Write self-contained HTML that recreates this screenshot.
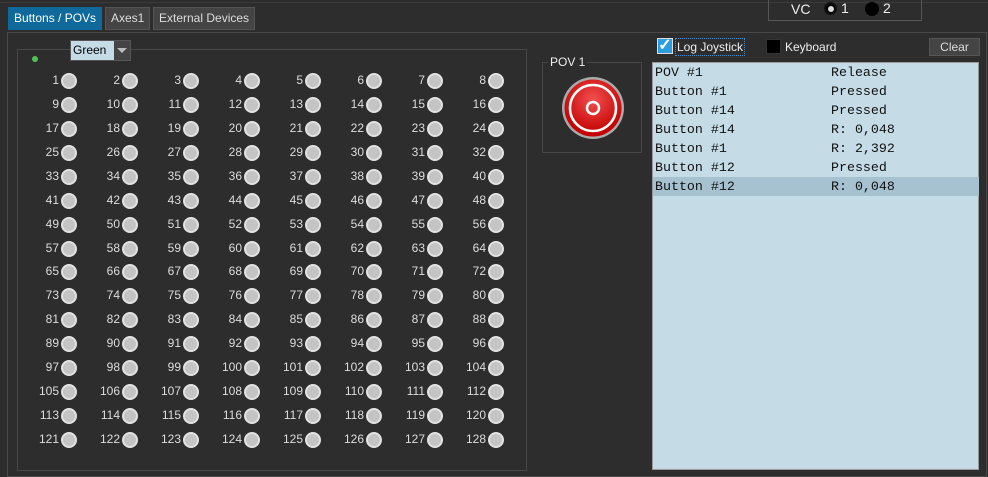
<!DOCTYPE html>
<html><head><style>
*{margin:0;padding:0;box-sizing:border-box}
body{width:988px;height:477px;background:#2d2d2d;font-family:"Liberation Sans",sans-serif;position:relative;overflow:hidden;color:#ddd}
.a{position:absolute}
.tab{position:absolute;top:7px;height:23px;font-size:12px;line-height:21px;padding:0 5px;border:1px solid #555;background:#444;color:#ddd}
.lbl{position:absolute;font-size:12px;color:#ddd;text-align:right;width:30px}
.c{position:absolute;width:16px;height:16px;border-radius:50%;background:#c4c4c4;border:2px solid #e2e2e2}
.log{font-family:"Liberation Mono",monospace;font-size:13.3px;color:#111}
.row{position:absolute;left:0;width:326px;height:19px;line-height:19px}
</style></head><body>
<div class="a" style="left:0;top:2px;width:988px;height:1px;background:#3a3a3a"></div>
<div class="tab" style="left:8px;background:#0f6a9b;border-color:#0f6a9b;color:#fff">Buttons / POVs</div>
<div class="tab" style="left:105px">Axes1</div>
<div class="tab" style="left:153px">External Devices</div>
<div class="a" style="left:768px;top:-2px;width:154px;height:23px;border:1px solid #555"></div>
<div class="a" style="left:791px;top:1px;font-size:14px;color:#eee">VC</div>
<div class="a" style="left:824px;top:2px;width:13px;height:13px;border-radius:50%;background:#000;border:2px solid #111"><div style="position:absolute;left:2px;top:2px;width:6px;height:6px;border-radius:50%;background:#ddd"></div></div>
<div class="a" style="left:841px;top:0px;font-size:14px;color:#eee">1</div>
<div class="a" style="left:865px;top:2px;width:14px;height:14px;border-radius:50%;background:#000"></div>
<div class="a" style="left:883px;top:0px;font-size:14px;color:#eee">2</div>
<div class="a" style="left:7px;top:32px;width:980px;height:445px;border:1px solid #484848"></div>
<div class="a" style="left:17px;top:49px;width:510px;height:422px;border:1px solid #484848"></div>
<div class="a" style="left:32px;top:56px;width:6px;height:6px;border-radius:50%;background:#4fc24f"></div>
<div class="a" style="left:70px;top:40px;width:61px;height:21px;border:1px solid #555;background:#c5dce6"></div>
<div class="a" style="left:73px;top:43px;font-size:12px;color:#000">Green</div>
<div class="a" style="left:114px;top:41px;width:16px;height:19px;background:#444"></div>
<div class="a" style="left:117px;top:48px;width:0;height:0;border-left:5px solid transparent;border-right:5px solid transparent;border-top:5px solid #bbb"></div>
<div id="g"></div>
<div class="a" style="left:542px;top:62px;width:100px;height:91px;border:1px solid #484848"></div>
<div class="a" style="left:548px;top:55px;font-size:12px;color:#eee;background:#2d2d2d;padding:0 2px">POV 1</div>
<svg class="a" style="left:560px;top:76px" width="66" height="66" viewBox="0 0 66 66">
<defs><radialGradient id="r" cx="0.5" cy="0.35" r="0.6"><stop offset="0" stop-color="#f25050"/><stop offset="1" stop-color="#c40000"/></radialGradient></defs>
<circle cx="33" cy="32" r="31" fill="#aaa"/><circle cx="33" cy="32" r="28.5" fill="url(#r)"/>
<circle cx="33" cy="32" r="23" fill="none" stroke="#fff" stroke-width="2.5"/>
<circle cx="33" cy="32" r="6" fill="none" stroke="#fff" stroke-width="2.5"/>
</svg>
<div class="a" style="left:657px;top:38px;width:16px;height:16px;background:#2b9de0;border:1px solid #ddd;color:#fff;font-size:16px;line-height:13px;text-align:center;font-weight:bold">✓</div>
<div class="a" style="left:675px;top:38px;font-size:12px;color:#eee;border:1px dotted #3b8fd0;padding:1px 1px">Log Joystick</div>
<div class="a" style="left:766px;top:39px;width:15px;height:15px;background:#000;border:1px solid #333"></div>
<div class="a" style="left:785px;top:40px;font-size:12px;color:#eee">Keyboard</div>
<div class="a" style="left:929px;top:38px;width:51px;height:18px;background:#444;border:1px solid #555;font-size:12px;color:#ddd;text-align:center;line-height:16px">Clear</div>
<div class="a log" style="left:652px;top:62px;width:327px;height:408px;background:#c5dce6;border:1px solid #999">
<div class="row" style="top:0"><span class="a" style="left:2px">POV #1</span><span class="a" style="left:178px">Release</span></div>
<div class="row" style="top:19px"><span class="a" style="left:2px">Button #1</span><span class="a" style="left:178px">Pressed</span></div>
<div class="row" style="top:38px"><span class="a" style="left:2px">Button #14</span><span class="a" style="left:178px">Pressed</span></div>
<div class="row" style="top:57px"><span class="a" style="left:2px">Button #14</span><span class="a" style="left:178px">R: 0,048</span></div>
<div class="row" style="top:76px"><span class="a" style="left:2px">Button #1</span><span class="a" style="left:178px">R: 2,392</span></div>
<div class="row" style="top:95px"><span class="a" style="left:2px">Button #12</span><span class="a" style="left:178px">Pressed</span></div>
<div class="row" style="top:114px;background:#a6c1d0"><span class="a" style="left:2px">Button #12</span><span class="a" style="left:178px">R: 0,048</span></div>
</div>
<script>
var h='';for(var i=0;i<128;i++){var r=Math.floor(i/8),c=i%8;var cx=69+c*61,cy=81+r*23.93;
h+='<div class="lbl" style="left:'+(cx-40)+'px;top:'+(cy-8)+'px">'+(i+1)+'</div><div class="c" style="left:'+(cx-8)+'px;top:'+(cy-8)+'px"></div>';}
document.getElementById('g').innerHTML=h;
</script>
</body></html>
